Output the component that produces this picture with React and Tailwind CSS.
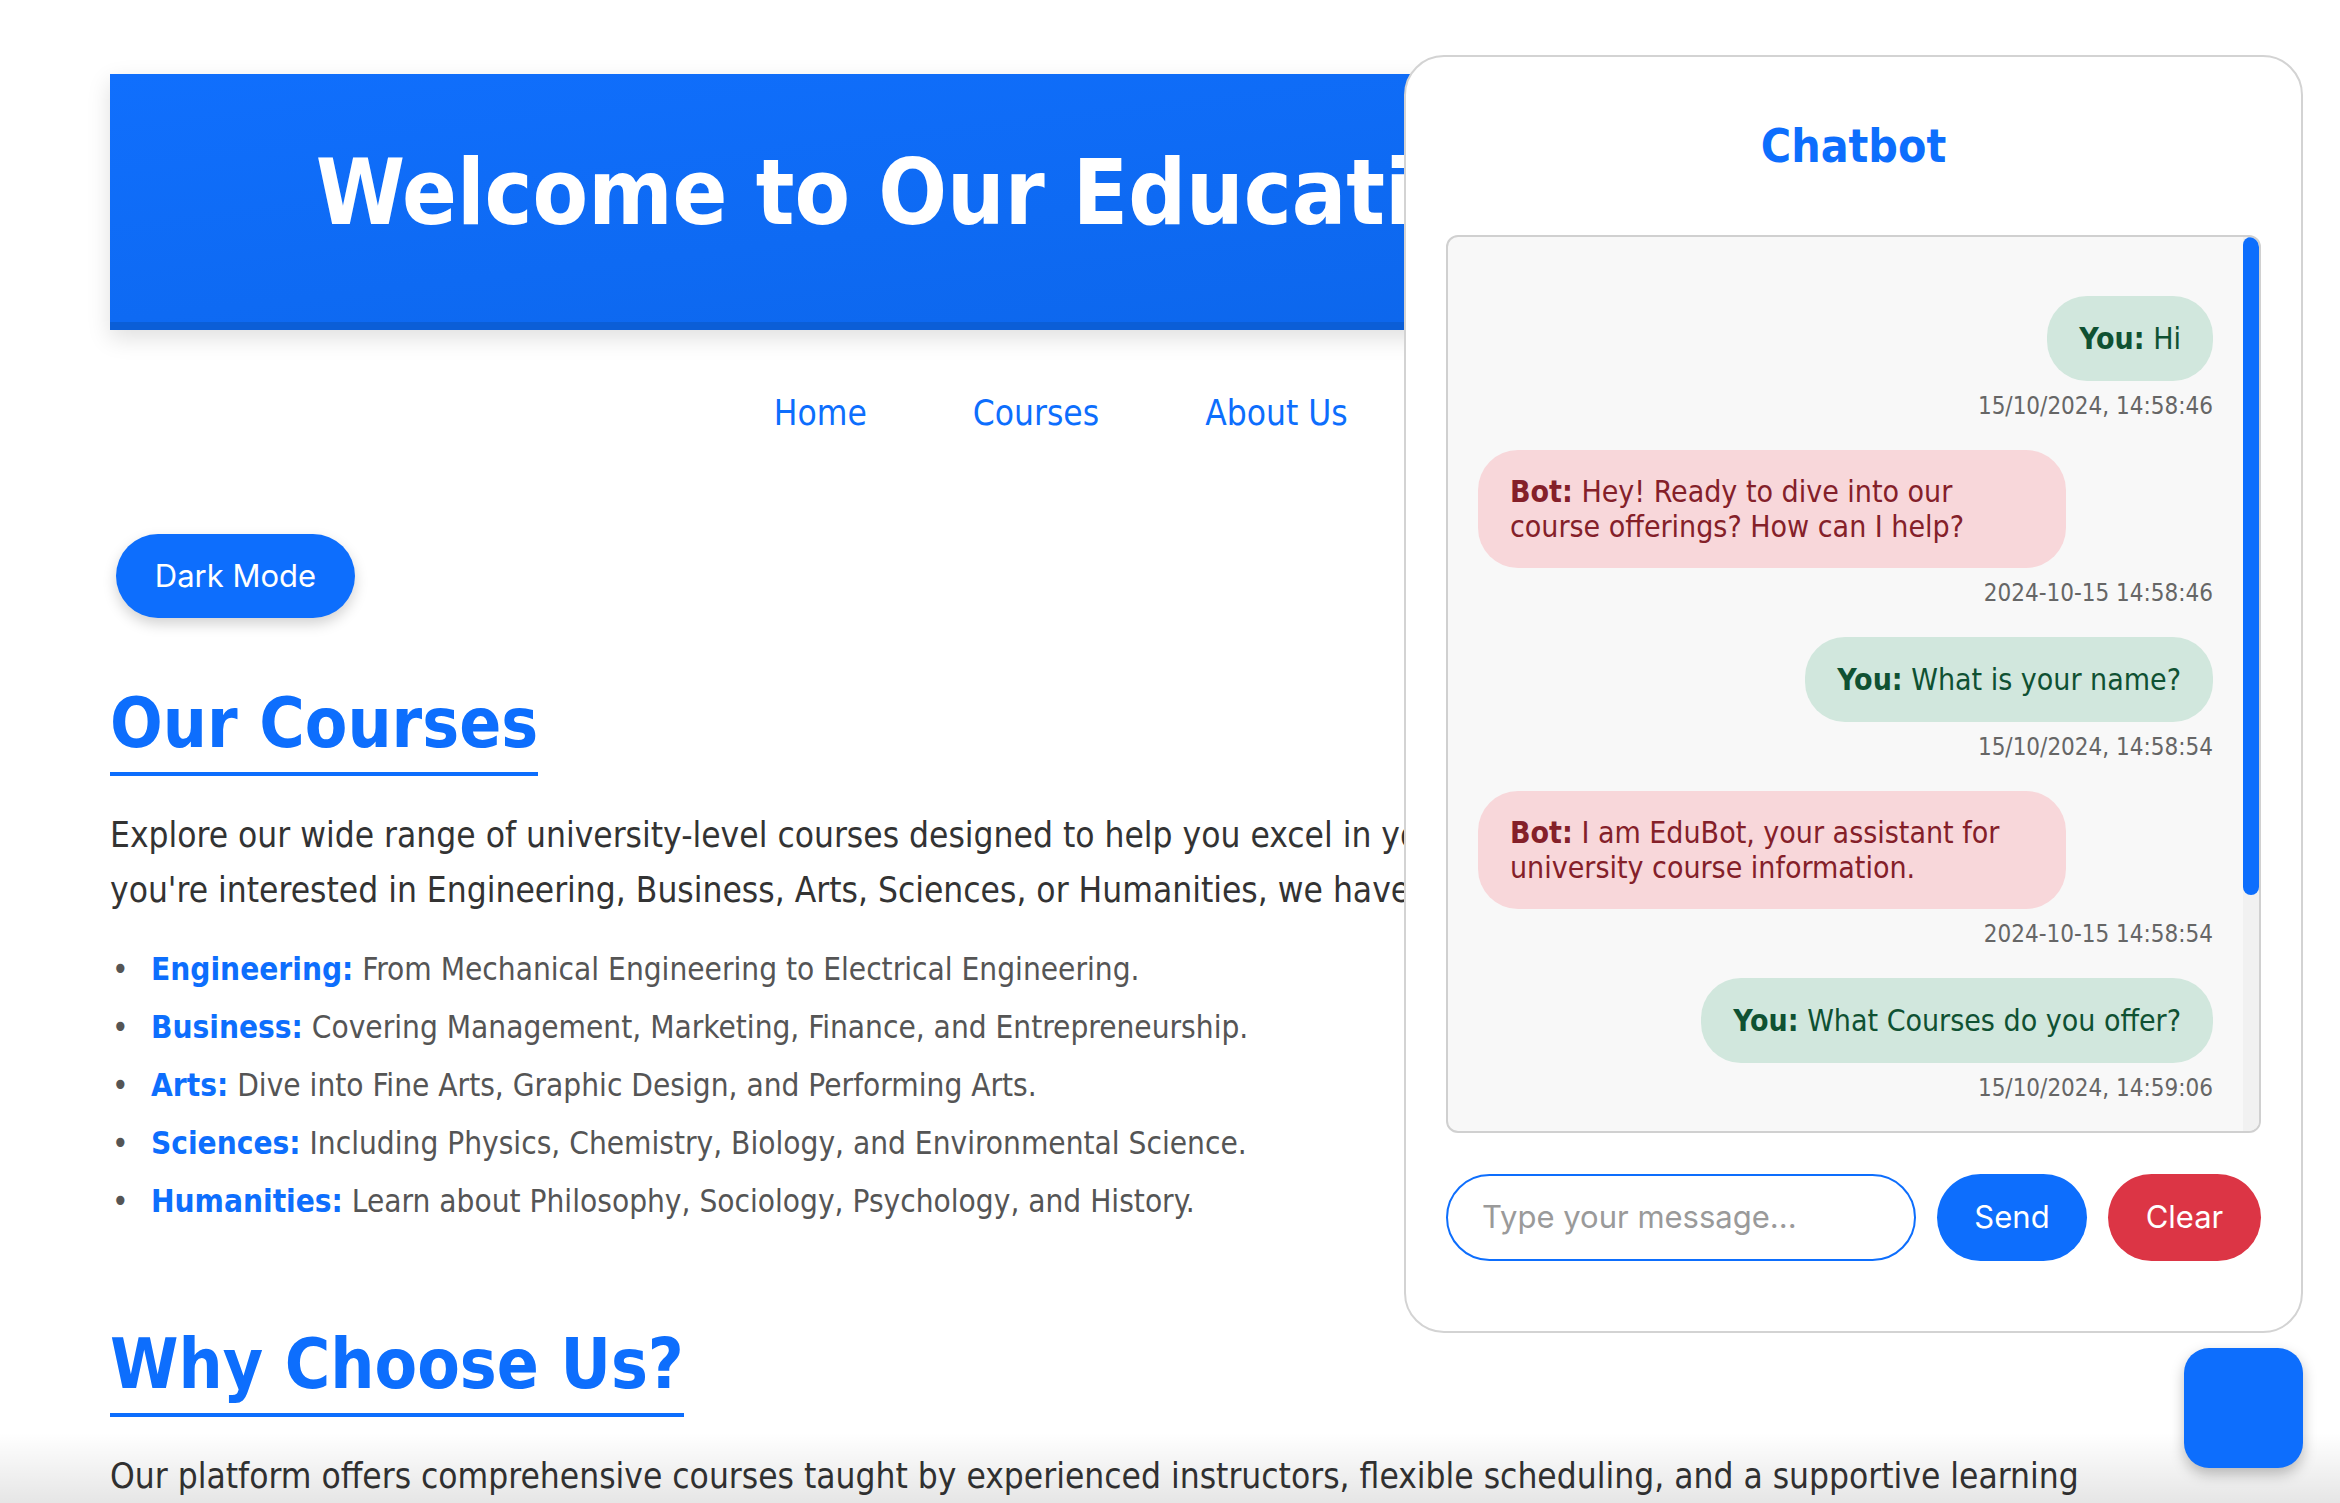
const messages = [
  { you: true, text: "Hi", ts: "15/10/2024, 14:58:46" },
  { you: false, text: "Hey! Ready to dive into our course offerings? How can I help?", ts: "2024-10-15 14:58:46" },
  { you: true, text: "What is your name?", ts: "15/10/2024, 14:58:54" },
  { you: false, text: "I am EduBot, your assistant for university course information.", ts: "2024-10-15 14:58:54" },
  { you: true, text: "What Courses do you offer?", ts: "15/10/2024, 14:59:06" },
  { you: false, text: "We offer courses in Engineering, Business, Arts, Sciences, and Humanities.", ts: "2024-10-15 14:59:06" },
];

const courses = [
  ["Engineering:", "From Mechanical Engineering to Electrical Engineering."],
  ["Business:", "Covering Management, Marketing, Finance, and Entrepreneurship."],
  ["Arts:", "Dive into Fine Arts, Graphic Design, and Performing Arts."],
  ["Sciences:", "Including Physics, Chemistry, Biology, and Environmental Science."],
  ["Humanities:", "Learn about Philosophy, Sociology, Psychology, and History."],
];

function Message({ m }) {
  return (
    <div className={m.you ? "mb-[30px] flex flex-col items-end" : "mb-[30px] flex flex-col items-start"}>
      <div
        className={
          m.you
            ? "max-w-[80%] rounded-[40px] bg-[#d1e7dd] px-[32px] py-[25px] text-[30px] leading-[35px] text-[#0f5132]"
            : "max-w-[80%] rounded-[40px] bg-[#f8d7da] px-[32px] py-[24px] text-[30px] leading-[35px] text-[#842029]"
        }
      >
        <strong className="font-bold">{m.you ? "You:" : "Bot:"}</strong> {m.text}
      </div>
      <div className="mt-[11px] self-stretch text-right text-[24px] leading-[28px] text-[#666]">{m.ts}</div>
    </div>
  );
}

export default function App() {
  return (
    <div className="relative h-[1503px] w-full overflow-hidden bg-white font-['DejaVu_Sans_Condensed','DejaVu_Sans',sans-serif] text-[#333]">
      <div className="px-[110px] pt-[74px]">
        <header className="h-[256px] overflow-hidden border-b-8 border-[#0b5ed7] bg-linear-to-br from-[#106ffd] to-[#0c65e9] pl-[8px] pt-[67px] text-center shadow-[0_8px_22px_rgba(0,0,0,0.13)]">
          <h1 className="whitespace-nowrap text-[90px] font-bold leading-[1.164] text-white">
            Welcome to Our Educational Platform
          </h1>
        </header>

        <nav className="mt-[63px] flex h-[40px] justify-center gap-[106px] pl-[10px] text-[35px] leading-[40px] text-[#0d6efd]">
          <a>Home</a>
          <a>Courses</a>
          <a>About Us</a>
          <a>Contact</a>
        </nav>

        <div className="mt-[101px] pl-[6px]">
          <button className="block h-[84px] w-[239px] rounded-full bg-[#0d6efd] font-['Inter',sans-serif] text-[31px] text-white shadow-[0_6px_14px_rgba(0,0,0,0.18)]">
            Dark Mode
          </button>
        </div>

        <section>
          <h2 className="mt-[65px] block w-fit border-b-4 border-[#0d6efd] pb-[8px] text-[69px] font-bold leading-[1.18] text-[#0d6efd]">
            Our Courses
          </h2>
          <p className="mt-[32px] text-[35px] leading-[55px] text-[#333]">
            Explore our wide range of university-level courses designed to help you excel in your academic journey. Whether
            <br />
            you're interested in Engineering, Business, Arts, Sciences, or Humanities, we have the right program for you.
          </p>
          <ul className="mt-[27px] space-y-[8.4px] text-[31.3px] leading-[49.6px] text-[#555]">
            {courses.map(([label, desc]) => (
              <li key={label} className="flex">
                <span className="w-[41px] shrink-0 pl-[2px] text-[#555]">•</span>
                <span>
                  <strong className="font-bold text-[#0d6efd]">{label}</strong> {desc}
                </span>
              </li>
            ))}
          </ul>
        </section>

        <section>
          <h2 className="mt-[97px] block w-fit border-b-4 border-[#0d6efd] pb-[8px] text-[69px] font-bold leading-[1.18] text-[#0d6efd]">
            Why Choose Us?
          </h2>
          <p className="mt-[32px] text-[35px] leading-[55px] text-[#333]">
            Our platform offers comprehensive courses taught by experienced instructors, flexible scheduling, and a supportive learning environment for every student.
          </p>
        </section>
      </div>

      <div className="pointer-events-none absolute inset-x-0 bottom-0 h-[70px] bg-linear-to-b from-transparent to-black/10" />

      <div className="absolute right-[37px] top-[55px] flex h-[1278px] w-[899px] flex-col rounded-[40px] border-2 border-[#d3d3d3] bg-white px-[40px] pt-[63px]">
        <h2 className="text-center text-[46px] font-bold leading-[1.164] text-[#0d6efd]">Chatbot</h2>
        <div className="mt-[61px] flex h-[898px] overflow-hidden rounded-[12px] border-2 border-[#d0d0d0] bg-[#f8f8f8]">
          <div className="min-w-0 flex-1 overflow-hidden px-[30px] pt-[59px]">
            {messages.map((m, i) => (
              <Message key={i} m={m} />
            ))}
          </div>
          <div className="flex w-[16px] flex-col bg-[#f1f1f1]">
            <div className="h-[658px] rounded-full bg-[#0d6efd]" />
          </div>
        </div>
        <div className="mt-[41px] flex h-[87px] gap-[21px]">
          <input
            type="text"
            placeholder="Type your message..."
            className="min-w-0 flex-1 rounded-full border-2 border-[#0d6efd] bg-white px-[34px] font-['Inter',sans-serif] text-[31px] text-[#333] outline-none placeholder:text-[#9a9a9a]"
          />
          <button className="w-[150px] rounded-full bg-[#0d6efd] font-['Inter',sans-serif] text-[31px] text-white">Send</button>
          <button className="w-[153px] rounded-full bg-[#dc3545] font-['Inter',sans-serif] text-[31px] text-white">Clear</button>
        </div>
      </div>

      <button className="absolute bottom-[35px] right-[37px] h-[120px] w-[119px] rounded-[25px] bg-[#0d6efd] shadow-[0_6px_14px_rgba(0,0,0,0.25)]" />
    </div>
  );
}
